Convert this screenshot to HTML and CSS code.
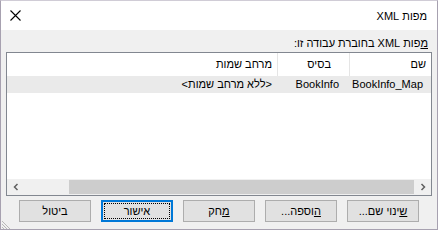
FILE: index.html
```html
<!DOCTYPE html>
<html lang="he" dir="rtl">
<head>
<meta charset="utf-8">
<title>מפות XML</title>
<link rel="stylesheet" href="styles.css">
</head>
<body>
<div class="window">
  <div class="titlebar">
    <span class="title">מפות XML</span>
    <span class="close">
      <svg width="11" height="11" viewBox="0 0 11 11"><path d="M0.5 0.5 L10.5 10.5 M10.5 0.5 L0.5 10.5" stroke="#000" stroke-width="1.1" fill="none"/></svg>
    </span>
  </div>
  <div class="content">
    <div class="label"><span class="mn">מ</span>פות XML בחוברת עבודה זו:</div>
    <div class="list">
      <div class="row header">
        <div class="cell c1">שם</div>
        <div class="cell c2">בסיס</div>
        <div class="cell c3">מרחב שמות</div>
      </div>
      <div class="row data">
        <div class="cell c1">BookInfo_Map</div>
        <div class="cell c2">BookInfo</div>
        <div class="cell c3">&lt;ללא מרחב שמות&gt;</div>
      </div>
      <div class="fill"></div>
      <div class="hscroll">
        <div class="arrow">
          <svg width="6" height="8" viewBox="0 0 6 8"><path d="M1.5 1 L4.5 4 L1.5 7" stroke="#606060" stroke-width="1.5" fill="none"/></svg>
        </div>
        <div class="track"><div class="thumb"></div></div>
        <div class="arrow">
          <svg width="6" height="8" viewBox="0 0 6 8"><path d="M4.5 1 L1.5 4 L4.5 7" stroke="#606060" stroke-width="1.5" fill="none"/></svg>
        </div>
      </div>
    </div>
    <div class="buttons">
      <div class="btn"><span class="mn">ש</span>ינוי שם...</div>
      <div class="btn"><span class="mn">ה</span>וספה...</div>
      <div class="btn"><span class="mn">מ</span>חק</div>
      <div class="btn default"><span class="focus">אישור</span></div>
      <div class="btn">ביטול</div>
    </div>
    <svg class="grip" width="9" height="9" viewBox="0 0 9 9">
      <path d="M0 1 L8 9 M0 4 L5 9 M0 7 L2 9" stroke="#b8b8b8" stroke-width="1" fill="none"/>
    </svg>
  </div>
</div>
</body>
</html>
```

FILE: styles.css
```css
* { box-sizing: border-box; }
html, body { margin: 0; padding: 0; }
body {
  width: 438px;
  height: 230px;
  font-family: "Liberation Sans", Arial, sans-serif;
  font-size: 11px;
  color: #000;
  background: #fff;
}
.window {
  width: 438px;
  height: 230px;
  border: 1px solid #a7a1b0;
  border-top-color: #d0ccd6;
  display: flex;
  flex-direction: column;
}
.titlebar {
  height: 29px;
  background: #fff;
  display: flex;
  align-items: center;
  justify-content: space-between;
  padding: 0 10px 0 9px;
}
.title {
  font-size: 11px;
  line-height: 14px;
  padding-top: 1px;
}
.close {
  display: flex;
  margin-top: -1px;
}
.content {
  position: relative;
  flex: 1;
  background: #f0f0f0;
  padding: 6px 5px 0 5px;
  display: flex;
  flex-direction: column;
}
.label {
  line-height: 14px;
  height: 14px;
  padding-right: 4px;
  margin-bottom: 2px;
}
.mn { text-decoration: underline; }
.list {
  height: 144px;
  background: #fff;
  border: 1px solid #828790;
  display: flex;
  flex-direction: column;
}
.row {
  display: flex;
}
.cell {
  white-space: nowrap;
}
.c1 { width: 82px; }
.c2 { width: 72px; }
.c3 { flex: 1; }
.header { height: 23px; }
.header .cell {
  line-height: 23px;
  border-left: 1px solid #e5e5e5;
}
.header .c3 { border-left: none; }
.header .c1 { padding-right: 5px; }
.header .c2 { padding-right: 18px; }
.header .c3 { padding-right: 5px; }
.data {
  height: 17px;
  background: #eaeaea;
}
.data .cell { line-height: 17px; }
.data .c1 { padding-right: 8px; }
.data .c2 { padding-right: 10px; }
.data .c3 { padding-right: 5px; }
.fill { flex: 1; }
.hscroll {
  height: 16px;
  background: #f0f0f0;
  display: flex;
}
.arrow {
  width: 17px;
  display: flex;
  align-items: center;
  justify-content: center;
}
.track {
  flex: 1;
  display: flex;
  padding: 1px 0;
}
.thumb {
  width: 345px;
  background: #cdcdcd;
}
.buttons {
  display: flex;
  gap: 10px;
  margin-top: 4px;
  padding-right: 13px;
}
.btn {
  width: 72px;
  height: 22px;
  background: #e1e1e1;
  border: 1px solid #adadad;
  display: flex;
  align-items: center;
  justify-content: center;
  line-height: 14px;
}
.btn.default {
  border: 2px solid #0078d7;
  padding: 1px;
}
.focus {
  flex: 1;
  align-self: stretch;
  display: flex;
  align-items: center;
  justify-content: center;
  border: 1px dotted #000;
}
.grip {
  position: absolute;
  left: 1px;
  bottom: 0;
}
```
